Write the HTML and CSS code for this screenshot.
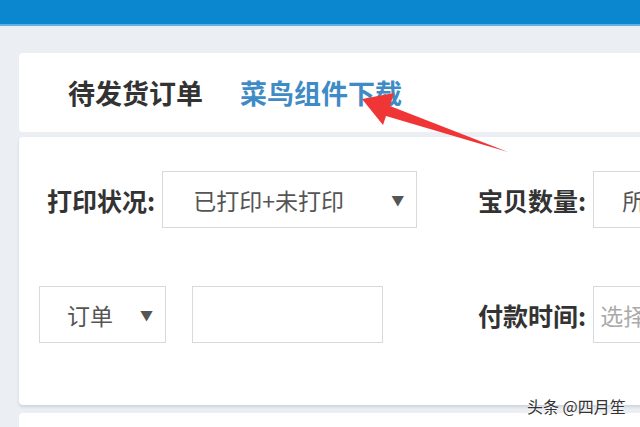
FILE: index.html
```html
<!DOCTYPE html>
<html lang="zh-CN">
<head>
    <meta charset="UTF-8">
    <meta name="viewport" content="width=device-width, initial-scale=1.0">
    <title>待发货订单</title>
    <link rel="stylesheet" href="styles.css">
</head>
<body>
    <div class="topbar"></div>

    <div class="main">
        <div class="card tabs">
            <span class="tab">待发货订单</span>
            <span class="tab link">菜鸟组件下载</span>
        </div>

        <div class="card filter">
            <div class="row">
                <div class="group first">
                    <span class="label">打印状况:</span>
                    <div class="select wide">
                        <span>已打印+未打印</span>
                        <span class="caret">▼</span>
                    </div>
                </div>
                <div class="group">
                    <span class="label">宝贝数量:</span>
                    <div class="select cut"><span>所有</span></div>
                </div>
            </div>
            <div class="row second">
                <div class="group">
                    <div class="select narrow">
                        <span>订单</span>
                        <span class="caret">▼</span>
                    </div>
                    <div class="input"></div>
                </div>
                <div class="group">
                    <span class="label">付款时间:</span>
                    <div class="select cut date"><span class="placeholder">选择时间</span></div>
                </div>
            </div>
        </div>

        <div class="card bottom"></div>
    </div>

    <svg class="arrow" width="640" height="427" viewBox="0 0 640 427">
        <polygon points="362,99 394,93 390,106 508,152 386,116 383,125" fill="#ef3535"/>
    </svg>

    <div class="watermark">头条 @四月笙</div>
</body>
</html>
```

FILE: styles.css
```css
* {
    margin: 0;
    padding: 0;
    box-sizing: border-box;
}
body {
    background: #ebeef3;
    font-family: "Noto Sans CJK SC", "Noto Sans", sans-serif;
    color: #333;
    width: 640px;
    height: 427px;
    overflow: hidden;
    position: relative;
}
.topbar {
    height: 26px;
    background: #0a87ce;
    border-bottom: 2px solid #62b0e2;
}
.main {
    width: 720px;
    padding: 27px 0 0 19px;
}
.card {
    background: white;
    border-radius: 4px;
}
.tabs {
    height: 79px;
    display: flex;
    align-items: center;
    gap: 37px;
    padding-left: 49px;
}
.tab {
    font-size: 27px;
    font-weight: 700;
    color: #333;
    line-height: 1;
}
.tab.link {
    color: #3f8bc6;
}
.filter {
    margin-top: 5px;
    height: 268px;
    padding: 34px 0 0 20px;
    box-shadow: 0 2px 3px rgba(120, 130, 150, 0.25);
}
.row {
    display: grid;
    grid-template-columns: 439px auto;
    align-items: center;
}
.row.second {
    margin-top: 58px;
}
.group {
    display: flex;
    align-items: center;
}
.group.first {
    padding-left: 8px;
}
.label {
    font-size: 25px;
    font-weight: 700;
    color: #333;
    margin-right: 7px;
    white-space: nowrap;
}
.select {
    height: 57px;
    border: 1px solid #d7d9df;
    display: flex;
    align-items: center;
    justify-content: space-between;
    font-size: 23px;
    color: #555;
    background: white;
}
.select.wide {
    width: 255px;
    padding: 0 12px 0 30px;
}
.select.narrow {
    width: 127px;
    padding: 0 12px 0 27px;
}
.select.cut {
    width: 160px;
    padding-left: 28px;
}
.select.date {
    padding-left: 6px;
}
.placeholder {
    color: #aaa;
}
.caret {
    font-size: 13px;
    color: #555;
}
.input {
    width: 191px;
    height: 57px;
    margin-left: 26px;
    border: 1px solid #d7d9df;
}
.bottom {
    margin-top: 8px;
    height: 40px;
}
.arrow {
    position: absolute;
    left: 0;
    top: 0;
}
.watermark {
    position: absolute;
    left: 527px;
    top: 394px;
    font-size: 16px;
    color: #333;
    text-shadow: 0 0 2px white, 0 0 2px white;
}
```
